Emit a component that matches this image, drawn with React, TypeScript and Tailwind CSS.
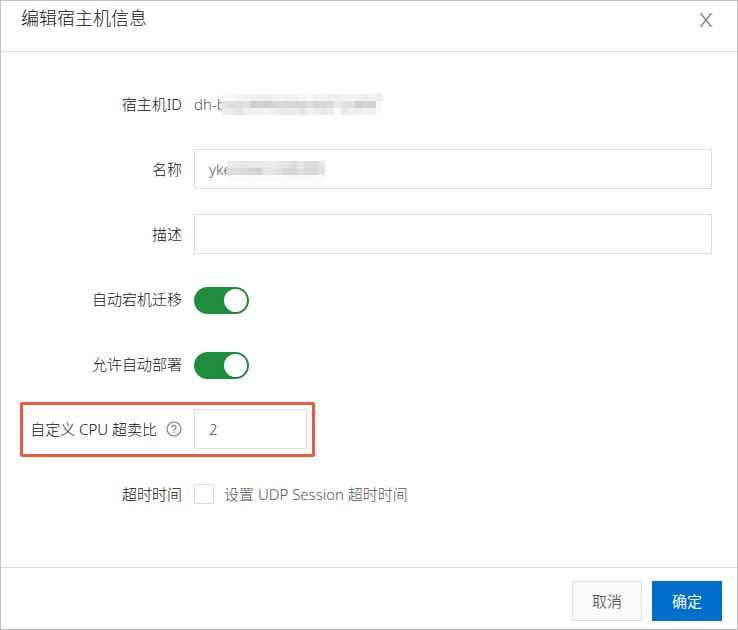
import { useId, useState } from "react";
import type { ReactNode } from "react";

// ─── Masked values (rows of grey levels, one cell per 7px) ────────────────────
const ID_MASK = [
  [248, 248, 244, 240, 242, 240, 238, 242, 242, 240, 242, 246, 248, 242, 244, 238, 238, 242, 242, 242, 236, 244, 236],
  [226, 222, 222, 224, 206, 212, 206, 210, 216, 214, 212, 214, 222, 212, 214, 218, 234, 226, 222, 206, 212, 208, 248],
  [236, 234, 228, 238, 242, 240, 242, 240, 234, 236, 234, 228, 240, 236, 232, 238, 250, 232, 240, 240, 242, 240, 250],
];

const NAME_MASK = [
  [236, 234, 230, 232, 232, 234, 238, 232, 228, 220, 230, 222, 220, 230],
  [220, 220, 218, 214, 210, 228, 228, 222, 216, 214, 222, 216, 216, 226],
  [250, 250, 249, 249, 249, 250, 251, 250, 248, 247, 248, 248, 248, 250],
];

function Mask({ cells }: { cells: number[][] }) {
  return (
    <svg width={cells[0].length * 7} height={cells.length * 7} shapeRendering="crispEdges" aria-hidden>
      {cells.map((row, y) =>
        row.map((level, x) => (
          <rect key={`${x}-${y}`} x={x * 7} y={y * 7} width="7" height="7" fill={`rgb(${level},${level},${level})`} />
        )),
      )}
    </svg>
  );
}

// ─── Icons ────────────────────────────────────────────────────────────────────

function CloseIcon() {
  return (
    <svg viewBox="0 0 14 14" fill="none" className="h-3.5 w-3.5" stroke="currentColor">
      <path d="M2.2 1l9.6 12M11.8 1L2.2 13" strokeWidth="1.5" />
      <path d="M0.5 0.9h3.2M10.3 0.9h3.2M0.5 13.1h3.2M10.3 13.1h3.2" strokeWidth="1" />
    </svg>
  );
}

function HelpIcon() {
  return (
    <svg viewBox="0 0 16 16" fill="none" className="h-4 w-4" stroke="currentColor" strokeWidth="1.1">
      <circle cx="8" cy="8" r="7" />
      <path d="M6 6.5a2 2 0 113.3 1.4C8.6 8.5 8 8.8 8 9.9" />
      <path d="M8 10.9v1.2" />
    </svg>
  );
}

// ─── Form pieces ──────────────────────────────────────────────────────────────

function Row({ label, htmlFor, help, children }: { label: string; htmlFor?: string; help?: boolean; children: ReactNode }) {
  return (
    <div className="relative flex min-h-10 items-center gap-3">
      <div className="flex w-[181px] shrink-0 items-center justify-end gap-[9px] text-[#111]">
        <label htmlFor={htmlFor}>{label}</label>
        {help && (
          <button type="button" aria-label="帮助" className="text-[#777]">
            <HelpIcon />
          </button>
        )}
      </div>
      {children}
    </div>
  );
}

function Toggle({ id }: { id: string }) {
  const [on, setOn] = useState(true);

  return (
    <span className="relative mt-0.5 flex h-[27px] w-[55px]">
      <input
        id={id}
        type="checkbox"
        role="switch"
        checked={on}
        onChange={() => setOn(!on)}
        className="peer h-full w-full appearance-none rounded-full bg-[#ccc] checked:bg-[#1e8e3e]"
      />
      <span className="pointer-events-none absolute top-0.5 left-0.5 h-[23px] w-[23px] rounded-full bg-white shadow peer-checked:right-0.5 peer-checked:left-auto" />
    </span>
  );
}

const INPUT = "h-10 border border-[#dedede] bg-white px-3.5 text-[#555] outline-none";

export default function App() {
  const id = useId();
  const [name, setName] = useState("yke");
  const [ratio, setRatio] = useState("2");

  return (
    <form
      className="border border-[#c1c1c1] bg-white font-['Noto_Sans','Noto_Sans_CJK_SC',sans-serif] text-[15px] leading-6 font-light"
      onSubmit={(e) => e.preventDefault()}
    >
      <header className="flex items-start justify-between border-b border-[#dedede] pr-6 pl-5">
        <h1 className="pb-4 text-lg leading-[34px] font-light text-[#111]">编辑宿主机信息</h1>
        <button type="button" aria-label="关闭" className="flex h-[38px] items-center text-[#888]">
          <CloseIcon />
        </button>
      </header>

      <div className="flex flex-col gap-[25px] pt-8 pr-[25px] pb-[53px]">
        <Row label="宿主机ID">
          <div className="relative text-[#555]">
            dh-b
            <span className="absolute top-0.5 left-7">
              <Mask cells={ID_MASK} />
            </span>
          </div>
        </Row>

        <Row label="名称" htmlFor={`${id}-name`}>
          <div className="relative flex-1">
            <input id={`${id}-name`} value={name} onChange={(e) => setName(e.target.value)} className={`${INPUT} w-full`} />
            <span className="pointer-events-none absolute top-3 left-[33px]">
              <Mask cells={NAME_MASK} />
            </span>
          </div>
        </Row>

        <Row label="描述" htmlFor={`${id}-desc`}>
          <input id={`${id}-desc`} className={`${INPUT} min-w-0 flex-1`} />
        </Row>

        <Row label="自动宕机迁移" htmlFor={`${id}-migrate`}>
          <Toggle id={`${id}-migrate`} />
        </Row>

        <Row label="允许自动部署" htmlFor={`${id}-deploy`}>
          <Toggle id={`${id}-deploy`} />
        </Row>

        <Row label="自定义 CPU 超卖比" htmlFor={`${id}-ratio`} help>
          <input id={`${id}-ratio`} value={ratio} onChange={(e) => setRatio(e.target.value)} className={`${INPUT} w-[113px]`} />
          {/* Highlight frame */}
          <span className="pointer-events-none absolute -top-[7px] left-[19px] h-[55px] w-[295px] rounded-xs border-3 border-[#f05a3c]" />
        </Row>

        <Row label="超时时间">
          <label className="flex items-center gap-2.5 text-[#555]">
            <input type="checkbox" className="h-5 w-5 appearance-none border border-[#dedede] bg-white checked:bg-[#0070cc]" />
            设置 UDP Session 超时时间
          </label>
        </Row>
      </div>

      <footer className="flex justify-end gap-2.5 border-t border-[#dedede] pt-[13px] pr-[15px] pb-2">
        <button type="button" className="h-10 w-[70px] border border-[#dedede] bg-[#fafafa] text-[#333]">
          取消
        </button>
        <button type="submit" className="h-10 w-[70px] bg-[#0070cc] font-normal text-white">
          确定
        </button>
      </footer>
    </form>
  );
}
